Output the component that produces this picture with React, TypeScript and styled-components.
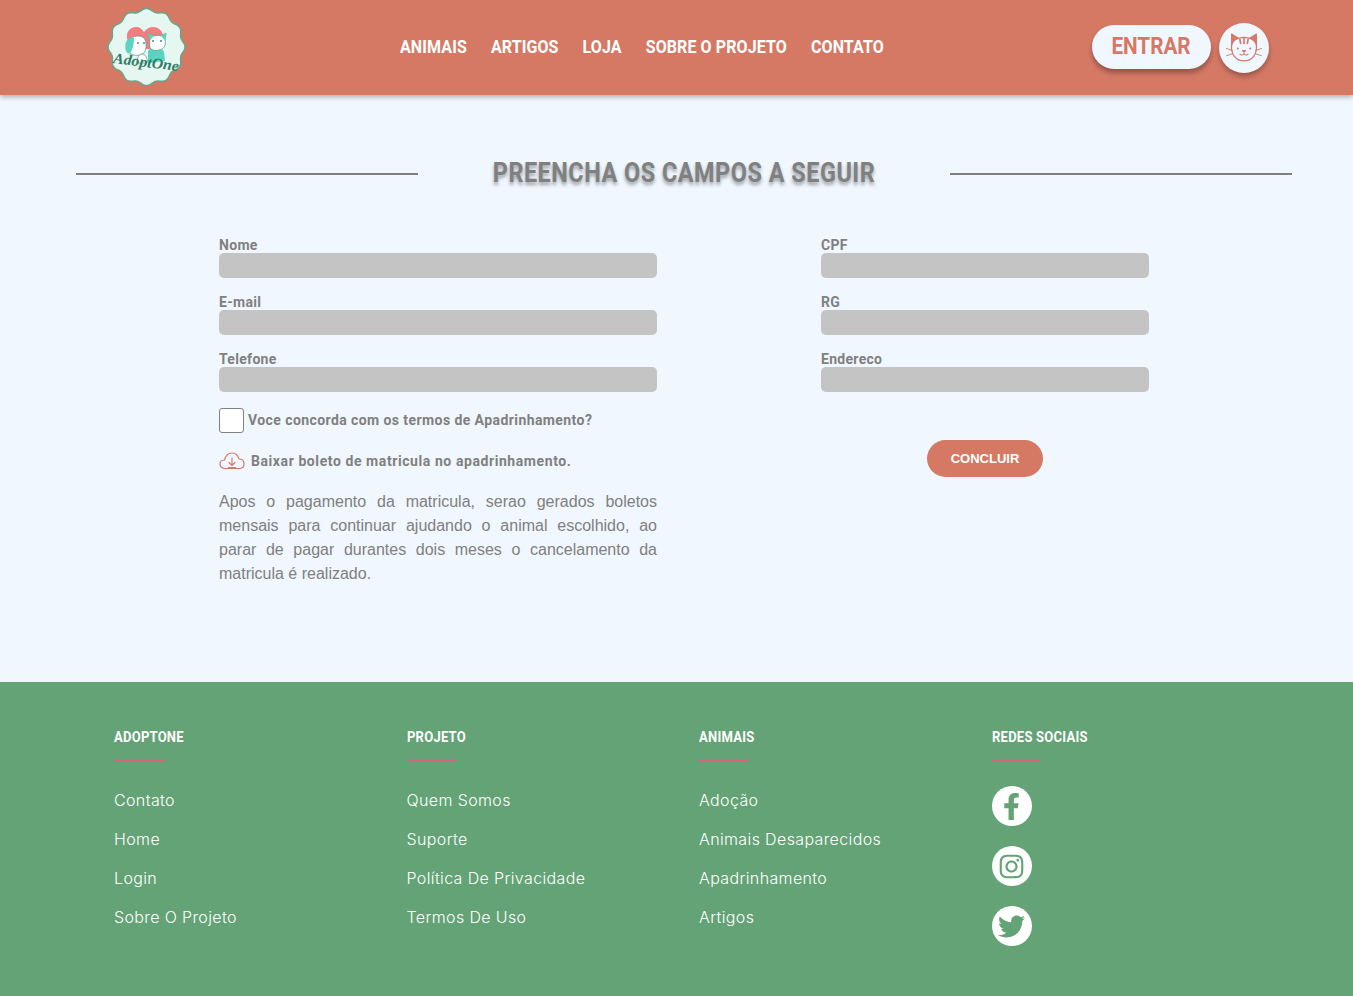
import React from "react";
import styled, { createGlobalStyle } from "styled-components";
import { FaFacebookF, FaInstagram, FaTwitter } from "react-icons/fa";

const Global = createGlobalStyle`
  html, body { margin: 0; padding: 0; background: #f0f7fe; }
  * { box-sizing: border-box; }
`;
const HEAD = `"Roboto", "Liberation Sans", sans-serif`;
const Page = styled.div`width: 1353px; height: 996px; overflow: hidden; display: flex; flex-direction: column;`;
const Header = styled.header`
  height: 95px; flex: none; background: #d57965; box-shadow: 0 2px 5px rgba(0,0,0,.3);
  position: relative; z-index: 1; display: flex; align-items: center; padding-left: 107px;
`;
const LogoBox = styled.div`width: 80px; height: 78px; flex: none; margin-top: -1px;`;
const Nav = styled.nav`
  display: flex; gap: 27px; margin-left: 213px; margin-top: -3px;
  transform: scaleX(.89); transform-origin: left center;
`;
const NavLink = styled.a`font: 700 18px ${HEAD}; color: #fff; letter-spacing: .1px;`;
const Actions = styled.div`display: flex; align-items: center; gap: 8px; margin-left: auto; margin-right: 84px;`;
const LoginButton = styled.button`
  width: 119px; height: 44px; border: 0; border-radius: 22px; background: #f0f7fe; color: #d57965;
  font: 700 23px ${HEAD}; box-shadow: 0 4px 5px rgba(0,0,0,.3); padding: 0; margin-top: -2px;
`;
const LoginText = styled.span`display: inline-block; transform: scaleX(.9);`;
const AvatarButton = styled.div`
  width: 50px; height: 50px; border-radius: 50%; background: #f0f7fe; box-shadow: 0 4px 5px rgba(0,0,0,.25);
  display: flex; align-items: center; justify-content: center;
`;
const Main = styled.main`flex: 1; display: flex; flex-direction: column; padding: 62px 61px 0 76px;`;
const TitleRow = styled.div`display: flex; align-items: center; height: 32px;`;
const Rule = styled.div`width: 342px; height: 2px; background: #808080; margin-top: 2px; flex: none;`;
const Title = styled.h1`
  flex: 1; margin: 0; text-align: center; font: 700 27px ${HEAD}; color: #808080;
  text-shadow: 0 3px 4px rgba(0,0,0,.35); letter-spacing: .55px; transform: scaleX(.87);
`;
const Form = styled.div`display: flex; gap: 164px; margin: 51px 0 0 143px;`;
const Column = styled.div<{ $w: number }>`width: ${p => p.$w}px; display: flex; flex-direction: column;`;
const Field = styled.div`display: flex; flex-direction: column; height: 57px;`;
const Label = styled.label`font: 700 14px/16px ${HEAD}; color: #808080; height: 16px; margin-top: -3px; letter-spacing: .3px;`;
const Input = styled.div`height: 25px; background: #c4c4c4; border-radius: 5px; flex: none;`;
const CheckRow = styled.div`display: flex; align-items: center; gap: 4px; margin-top: -3px;`;
const Check = styled.div`width: 25px; height: 25px; border: 1px solid #808080; border-radius: 3px; background: #fff; flex: none;`;
const CheckText = styled.span`font: 700 14px ${HEAD}; color: #808080; letter-spacing: .42px; margin-bottom: 2px;`;
const DownloadText = styled.span`font: 700 14px ${HEAD}; color: #808080; letter-spacing: .58px;`;
const DownloadRow = styled.div`display: flex; align-items: center; gap: 6px; margin-top: 16px; height: 24px;`;
const Paragraph = styled.p`margin: 17px 0 0; font: 16px/24px "Liberation Sans", sans-serif; color: #808080; text-align: justify;`;
const Submit = styled.button`
  width: 116px; height: 37px; border: 0; border-radius: 19px; background: #d57965; color: #fff;
  font: 700 13px "Liberation Sans", sans-serif; align-self: center; margin-top: 29px;
`;
const Footer = styled.footer`
  height: 314px; flex: none; background: #63a375; padding: 47px 0 0 114px;
  display: grid; grid-template-columns: repeat(4, 292.5px); align-content: start;
`;
const FooterCol = styled.div`display: flex; flex-direction: column;`;
const FooterTitle = styled.h3`
  margin: 0; font: 700 14px/17px ${HEAD}; color: #fff; letter-spacing: .25px;
  transform: scaleX(.93); transform-origin: left center;
`;
const Accent = styled.div<{ $w: number }>`width: ${p => p.$w}px; height: 2px; background: #d5657f; margin-top: 14px; margin-bottom: 28px;`;
const FooterLink = styled.a`font: 300 16px/20px "Inter", sans-serif; color: #fff; margin-bottom: 19px; letter-spacing: .37px;`;
const Socials = styled.div`display: flex; flex-direction: column; gap: 20px; margin-top: -4px;`;
const Social = styled.div`
  width: 40px; height: 40px; border-radius: 50%; background: #fff; color: #63a375; font-size: 27px;
  display: flex; align-items: center; justify-content: center;
`;

const scallop = (() => {
  const pts: string[] = [];
  const n = 240;
  for (let i = 0; i < n; i++) {
    const a = (i / n) * Math.PI * 2;
    const r = 37 + 1.5 * Math.cos(a * 12);
    pts.push(`${(39.5 + r * Math.cos(a)).toFixed(2)},${(39 + r * Math.sin(a)).toFixed(2)}`);
  }
  return pts.join(" ");
})();

const Logo = () => (
  <svg width="80" height="78" viewBox="0 0 80 78">
    <polygon points={scallop} fill="#e6f6f0" stroke="#5fa98a" strokeWidth="1.4" />
    <path d="M20 30c-1-7 4-11 9-11 4 0 6 2 8 5 2-3 5-5 9-5 5 0 9 3 10 8 1 5-2 10-8 14H27c-4-3-6-7-7-11z" fill="#f27f7f" />
    <path d="M20 35c3-7 12-9 17-5 3 4 3 12-1 16-4 2-10 2-13-1-2-3-4-6-3-10z" fill="#fff" stroke="#4f9d84" strokeWidth=".7" />
    <path d="M24 30c-5 1-7 7-5 13 1 3 4 3 5 1 2-4 3-9 3-14z" fill="#5ad4c0" />
    <path d="M41 55V44c0-3 3-4 7-4s8 1 9 4l1 9z" fill="#5ad4c0" />
    <path d="M43 32l-2-7 6 3c3-1 5-1 7 0l5-3-1 7c1 4 0 7-3 9-4 2-8 2-11 0-2-2-2-6-1-9z" fill="#fff" stroke="#4f9d84" strokeWidth=".8" />
    <path d="M41 25l6 3-4 4zM59 25l-5 3 4 4z" fill="#5ad4c0" />
    <circle cx="46" cy="33" r=".9" fill="#2f7f68" /><circle cx="54" cy="33" r=".9" fill="#2f7f68" />
    <circle cx="31" cy="35" r=".9" fill="#2f7f68" /><circle cx="37" cy="35" r=".9" fill="#2f7f68" />
    <path d="M30 55c0-5 2-9 5-9s6 4 5 9z" fill="#fff" stroke="#4f9d84" strokeWidth=".7" />
    <text x="39" y="59" textAnchor="middle" fontFamily="'Liberation Serif', serif" fontStyle="italic" fontWeight="700" fontSize="15" fill="#2f7d66" transform="rotate(7 39 55)" textLength="66" lengthAdjust="spacingAndGlyphs">AdoptOne</text>
  </svg>
);

const Cat = () => (
  <svg width="38" height="33" viewBox="0 0 36 32" fill="none" stroke="#d57965" strokeWidth="1.2" strokeLinecap="round" strokeLinejoin="round">
    <path d="M6 15V3l8 5c3-1 5-1 8 0l8-5v12" fill="#d57965" />
    <path d="M6 14c-1 8 4 15 12 15s13-7 12-15c-1-4-3-6-7-7-3-1-7-1-10 0-4 1-6 3-7 7z" fill="#f0f7fe" />
    <path d="M18 7v5M14 8l.7 4M22 8l-.7 4" strokeWidth="1.6" />
    <path d="M16.500 19h3L18 20.500zM18 20.500V22c-1 1.500-3 1.500-4 .5M18 22c1 1.500 3 1.500 4 .5" strokeWidth="1" />
    <circle cx="12" cy="17" r="1" fill="#d57965" stroke="none" /><circle cx="24" cy="17" r="1" fill="#d57965" stroke="none" />
    <path d="M1 17l6 2M1 24l6-2M35 17l-6 2M35 24l-6-2" strokeWidth=".9" />
  </svg>
);

const Cloud = () => (
  <svg width="26" height="18" viewBox="0 0 26 18" fill="none" stroke="#d57965" strokeWidth="1.2" strokeLinecap="round" strokeLinejoin="round" style={{ flex: "none" }}>
    <path d="M6 16.500c-3 0-5-2-5-4.500 0-2.500 2-4 4.500-4C6.500 4 9.500 1 13 1s6 2.500 7 6c3 0 5 2 5 4.700 0 2.800-2 4.800-5 4.800z" />
    <path d="M13 6v7M10 10.500l3 3 3-3M9.500 15.500h7" />
  </svg>
);

const cols = [
  { title: "ADOPTONE", w: 50, links: ["Contato", "Home", "Login", "Sobre O Projeto"] },
  { title: "PROJETO", w: 50, links: ["Quem Somos", "Suporte", "Política De Privacidade", "Termos De Uso"] },
  { title: "ANIMAIS", w: 50, links: ["Adoção", "Animais Desaparecidos", "Apadrinhamento", "Artigos"] },
];

export default function App() {
  return (
    <Page>
      <Global />
      <Header>
        <LogoBox><Logo /></LogoBox>
        <Nav>
          {["ANIMAIS", "ARTIGOS", "LOJA", "SOBRE O PROJETO", "CONTATO"].map(t => <NavLink key={t}>{t}</NavLink>)}
        </Nav>
        <Actions>
          <LoginButton><LoginText>ENTRAR</LoginText></LoginButton>
          <AvatarButton><Cat /></AvatarButton>
        </Actions>
      </Header>
      <Main>
        <TitleRow>
          <Rule />
          <Title>PREENCHA OS CAMPOS A SEGUIR</Title>
          <Rule />
        </TitleRow>
        <Form>
          <Column $w={438}>
            {["Nome", "E-mail", "Telefone"].map(t => (
              <Field key={t}><Label>{t}</Label><Input /></Field>
            ))}
            <CheckRow><Check /><CheckText>Voce concorda com os termos de Apadrinhamento?</CheckText></CheckRow>
            <DownloadRow><Cloud /><DownloadText>Baixar boleto de matricula no apadrinhamento.</DownloadText></DownloadRow>
            <Paragraph>Apos o pagamento da matricula, serao gerados boletos mensais para continuar ajudando o animal escolhido, ao parar de pagar durantes dois meses o cancelamento da matricula é realizado.</Paragraph>
          </Column>
          <Column $w={328}>
            {["CPF", "RG", "Endereco"].map(t => (
              <Field key={t}><Label>{t}</Label><Input /></Field>
            ))}
            <Submit>CONCLUIR</Submit>
          </Column>
        </Form>
      </Main>
      <Footer>
        {cols.map(c => (
          <FooterCol key={c.title}>
            <FooterTitle>{c.title}</FooterTitle>
            <Accent $w={c.w} />
            {c.links.map(l => <FooterLink key={l}>{l}</FooterLink>)}
          </FooterCol>
        ))}
        <FooterCol>
          <FooterTitle>REDES SOCIAIS</FooterTitle>
          <Accent $w={48} />
          <Socials>
            <Social><FaFacebookF /></Social>
            <Social><FaInstagram size={27} /></Social>
            <Social><FaTwitter size={27} /></Social>
          </Socials>
        </FooterCol>
      </Footer>
    </Page>
  );
}
